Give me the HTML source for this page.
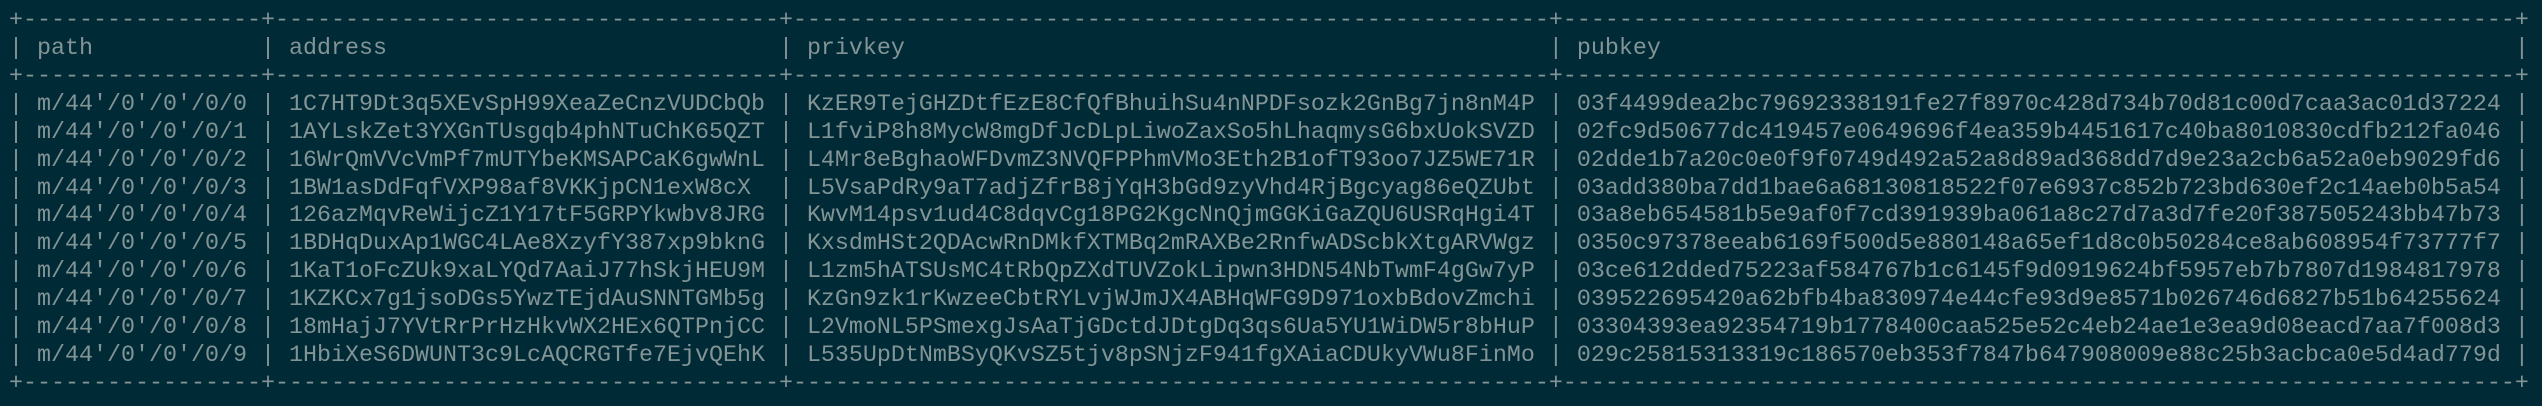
<!DOCTYPE html>
<html><head><meta charset="utf-8"><style>
html,body{margin:0;padding:0;background:#002b36;width:2542px;height:406px;overflow:hidden}
pre{position:absolute;margin:0;font-family:"Liberation Mono",monospace;font-size:23.33px;line-height:27.92px;color:#839496;white-space:pre}
</style></head><body>
<pre style="left:9px;top:8px">+-----------------+------------------------------------+------------------------------------------------------+--------------------------------------------------------------------+</pre>
<pre style="left:9px;top:63.84px">+-----------------+------------------------------------+------------------------------------------------------+--------------------------------------------------------------------+</pre>
<pre style="left:9px;top:370.96px">+-----------------+------------------------------------+------------------------------------------------------+--------------------------------------------------------------------+</pre>
<pre style="left:9px;top:35.92px">|
 
|
|
|
|
|
|
|
|
|
|</pre>
<pre style="left:calc(9px + 18ch);top:35.92px">|
 
|
|
|
|
|
|
|
|
|
|</pre>
<pre style="left:calc(9px + 55ch);top:35.92px">|
 
|
|
|
|
|
|
|
|
|
|</pre>
<pre style="left:calc(9px + 110ch);top:35.92px">|
 
|
|
|
|
|
|
|
|
|
|</pre>
<pre style="left:calc(9px + 179ch);top:35.92px">|
 
|
|
|
|
|
|
|
|
|
|</pre>
<pre style="left:calc(9px + 2ch);top:35.92px">path
 
m/44'/0'/0'/0/0
m/44'/0'/0'/0/1
m/44'/0'/0'/0/2
m/44'/0'/0'/0/3
m/44'/0'/0'/0/4
m/44'/0'/0'/0/5
m/44'/0'/0'/0/6
m/44'/0'/0'/0/7
m/44'/0'/0'/0/8
m/44'/0'/0'/0/9</pre>
<pre style="left:calc(9px + 20ch);top:35.92px">address
 
1C7HT9Dt3q5XEvSpH99XeaZeCnzVUDCbQb
1AYLskZet3YXGnTUsgqb4phNTuChK65QZT
16WrQmVVcVmPf7mUTYbeKMSAPCaK6gwWnL
1BW1asDdFqfVXP98af8VKKjpCN1exW8cX
126azMqvReWijcZ1Y17tF5GRPYkwbv8JRG
1BDHqDuxAp1WGC4LAe8XzyfY387xp9bknG
1KaT1oFcZUk9xaLYQd7AaiJ77hSkjHEU9M
1KZKCx7g1jsoDGs5YwzTEjdAuSNNTGMb5g
18mHajJ7YVtRrPrHzHkvWX2HEx6QTPnjCC
1HbiXeS6DWUNT3c9LcAQCRGTfe7EjvQEhK</pre>
<pre style="left:calc(9px + 57ch);top:35.92px">privkey
 
KzER9TejGHZDtfEzE8CfQfBhuihSu4nNPDFsozk2GnBg7jn8nM4P
L1fviP8h8MycW8mgDfJcDLpLiwoZaxSo5hLhaqmysG6bxUokSVZD
L4Mr8eBghaoWFDvmZ3NVQFPPhmVMo3Eth2B1ofT93oo7JZ5WE71R
L5VsaPdRy9aT7adjZfrB8jYqH3bGd9zyVhd4RjBgcyag86eQZUbt
KwvM14psv1ud4C8dqvCg18PG2KgcNnQjmGGKiGaZQU6USRqHgi4T
KxsdmHSt2QDAcwRnDMkfXTMBq2mRAXBe2RnfwADScbkXtgARVWgz
L1zm5hATSUsMC4tRbQpZXdTUVZokLipwn3HDN54NbTwmF4gGw7yP
KzGn9zk1rKwzeeCbtRYLvjWJmJX4ABHqWFG9D971oxbBdovZmchi
L2VmoNL5PSmexgJsAaTjGDctdJDtgDq3qs6Ua5YU1WiDW5r8bHuP
L535UpDtNmBSyQKvSZ5tjv8pSNjzF941fgXAiaCDUkyVWu8FinMo</pre>
<pre style="left:calc(9px + 112ch);top:35.92px">pubkey
 
03f4499dea2bc79692338191fe27f8970c428d734b70d81c00d7caa3ac01d37224
02fc9d50677dc419457e0649696f4ea359b4451617c40ba8010830cdfb212fa046
02dde1b7a20c0e0f9f0749d492a52a8d89ad368dd7d9e23a2cb6a52a0eb9029fd6
03add380ba7dd1bae6a68130818522f07e6937c852b723bd630ef2c14aeb0b5a54
03a8eb654581b5e9af0f7cd391939ba061a8c27d7a3d7fe20f387505243bb47b73
0350c97378eeab6169f500d5e880148a65ef1d8c0b50284ce8ab608954f73777f7
03ce612dded75223af584767b1c6145f9d0919624bf5957eb7b7807d1984817978
039522695420a62bfb4ba830974e44cfe93d9e8571b026746d6827b51b64255624
03304393ea92354719b1778400caa525e52c4eb24ae1e3ea9d08eacd7aa7f008d3
029c25815313319c186570eb353f7847b647908009e88c25b3acbca0e5d4ad779d</pre>
</body></html>
